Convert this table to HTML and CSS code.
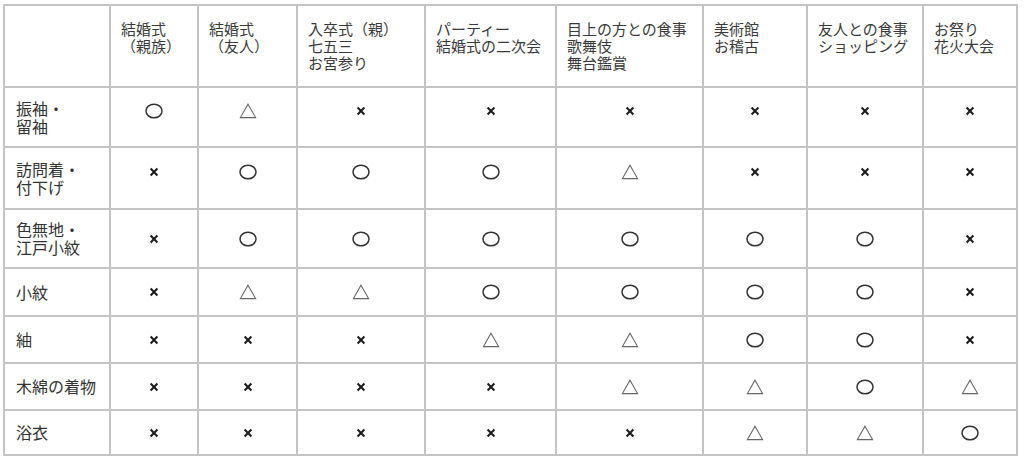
FILE: index.html
```html
<!DOCTYPE html>
<html lang="ja">
<head>
<meta charset="utf-8">
<title>着物の格と場面</title>
<link rel="stylesheet" href="styles.css">
</head>
<body>
<svg class="defs" width="0" height="0" aria-hidden="true">
  <symbol id="o" viewBox="0 0 18 16"><ellipse cx="9" cy="8" rx="8" ry="6.8" fill="none" stroke="#333" stroke-width="1.5"/></symbol>
  <symbol id="t" viewBox="0 0 18 16"><path d="M9 1.2 L16.6 14.6 H1.4 Z" fill="none" stroke="#666" stroke-width="1.1"/></symbol>
  <symbol id="x" viewBox="0 0 10 10"><path d="M1.6 1.6 L8.4 8.4 M8.4 1.6 L1.6 8.4" stroke="#1e1e1e" stroke-width="2.1"/></symbol>
</svg>
<div class="grid" role="table">
  <div class="cell head"></div>
  <div class="cell head">結婚式<br>（親族）</div>
  <div class="cell head">結婚式<br>（友人）</div>
  <div class="cell head">入卒式（親）<br>七五三<br>お宮参り</div>
  <div class="cell head">パーティー<br>結婚式の二次会</div>
  <div class="cell head">目上の方との食事<br>歌舞伎<br>舞台鑑賞</div>
  <div class="cell head">美術館<br>お稽古</div>
  <div class="cell head">友人との食事<br>ショッピング</div>
  <div class="cell head">お祭り<br>花火大会</div>

  <div class="cell label">振袖・<br>留袖</div>
  <div class="cell sym up"><svg class="so"><use href="#o"/></svg></div>
  <div class="cell sym up"><svg class="st"><use href="#t"/></svg></div>
  <div class="cell sym up"><svg class="sx"><use href="#x"/></svg></div>
  <div class="cell sym up"><svg class="sx"><use href="#x"/></svg></div>
  <div class="cell sym up"><svg class="sx"><use href="#x"/></svg></div>
  <div class="cell sym up"><svg class="sx"><use href="#x"/></svg></div>
  <div class="cell sym up"><svg class="sx"><use href="#x"/></svg></div>
  <div class="cell sym up"><svg class="sx"><use href="#x"/></svg></div>

  <div class="cell label">訪問着・<br>付下げ</div>
  <div class="cell sym up"><svg class="sx"><use href="#x"/></svg></div>
  <div class="cell sym up"><svg class="so"><use href="#o"/></svg></div>
  <div class="cell sym up"><svg class="so"><use href="#o"/></svg></div>
  <div class="cell sym up"><svg class="so"><use href="#o"/></svg></div>
  <div class="cell sym up"><svg class="st"><use href="#t"/></svg></div>
  <div class="cell sym up"><svg class="sx"><use href="#x"/></svg></div>
  <div class="cell sym up"><svg class="sx"><use href="#x"/></svg></div>
  <div class="cell sym up"><svg class="sx"><use href="#x"/></svg></div>

  <div class="cell label">色無地・<br>江戸小紋</div>
  <div class="cell sym"><svg class="sx"><use href="#x"/></svg></div>
  <div class="cell sym"><svg class="so"><use href="#o"/></svg></div>
  <div class="cell sym"><svg class="so"><use href="#o"/></svg></div>
  <div class="cell sym"><svg class="so"><use href="#o"/></svg></div>
  <div class="cell sym"><svg class="so"><use href="#o"/></svg></div>
  <div class="cell sym"><svg class="so"><use href="#o"/></svg></div>
  <div class="cell sym"><svg class="so"><use href="#o"/></svg></div>
  <div class="cell sym"><svg class="sx"><use href="#x"/></svg></div>

  <div class="cell label">小紋</div>
  <div class="cell sym"><svg class="sx"><use href="#x"/></svg></div>
  <div class="cell sym"><svg class="st"><use href="#t"/></svg></div>
  <div class="cell sym"><svg class="st"><use href="#t"/></svg></div>
  <div class="cell sym"><svg class="so"><use href="#o"/></svg></div>
  <div class="cell sym"><svg class="so"><use href="#o"/></svg></div>
  <div class="cell sym"><svg class="so"><use href="#o"/></svg></div>
  <div class="cell sym"><svg class="so"><use href="#o"/></svg></div>
  <div class="cell sym"><svg class="sx"><use href="#x"/></svg></div>

  <div class="cell label">紬</div>
  <div class="cell sym"><svg class="sx"><use href="#x"/></svg></div>
  <div class="cell sym"><svg class="sx"><use href="#x"/></svg></div>
  <div class="cell sym"><svg class="sx"><use href="#x"/></svg></div>
  <div class="cell sym"><svg class="st"><use href="#t"/></svg></div>
  <div class="cell sym"><svg class="st"><use href="#t"/></svg></div>
  <div class="cell sym"><svg class="so"><use href="#o"/></svg></div>
  <div class="cell sym"><svg class="so"><use href="#o"/></svg></div>
  <div class="cell sym"><svg class="sx"><use href="#x"/></svg></div>

  <div class="cell label">木綿の着物</div>
  <div class="cell sym"><svg class="sx"><use href="#x"/></svg></div>
  <div class="cell sym"><svg class="sx"><use href="#x"/></svg></div>
  <div class="cell sym"><svg class="sx"><use href="#x"/></svg></div>
  <div class="cell sym"><svg class="sx"><use href="#x"/></svg></div>
  <div class="cell sym"><svg class="st"><use href="#t"/></svg></div>
  <div class="cell sym"><svg class="st"><use href="#t"/></svg></div>
  <div class="cell sym"><svg class="so"><use href="#o"/></svg></div>
  <div class="cell sym"><svg class="st"><use href="#t"/></svg></div>

  <div class="cell label">浴衣</div>
  <div class="cell sym"><svg class="sx"><use href="#x"/></svg></div>
  <div class="cell sym"><svg class="sx"><use href="#x"/></svg></div>
  <div class="cell sym"><svg class="sx"><use href="#x"/></svg></div>
  <div class="cell sym"><svg class="sx"><use href="#x"/></svg></div>
  <div class="cell sym"><svg class="sx"><use href="#x"/></svg></div>
  <div class="cell sym"><svg class="st"><use href="#t"/></svg></div>
  <div class="cell sym"><svg class="st"><use href="#t"/></svg></div>
  <div class="cell sym"><svg class="so"><use href="#o"/></svg></div>
</div>
</body>
</html>
```

FILE: styles.css
```css
* { box-sizing: border-box; }

html, body {
  margin: 0;
  padding: 0;
  background: #ffffff;
}

body {
  font-family: "Liberation Sans", "Noto Sans CJK JP", sans-serif;
  color: #333333;
}

.defs {
  position: absolute;
  width: 0;
  height: 0;
  overflow: hidden;
}

.grid {
  display: grid;
  grid-template-columns: 104px 86px 97px 126px 129px 145px 102px 114px 92px;
  grid-template-rows: 80px 58px 60px 57px 46px 45px 45px 43px;
  gap: 2px;
  padding: 2px;
  margin: 4px 0 0 3px;
  width: max-content;
  background: #c4c4c4;
}

.cell {
  background: #ffffff;
}

.head {
  font-size: 15px;
  line-height: 17px;
  padding: 15px 4px 0 10px;
  white-space: nowrap;
  color: #3a3a3a;
}

.label {
  display: flex;
  align-items: center;
  font-size: 16px;
  line-height: 18px;
  padding: 3px 4px 0 11px;
  white-space: nowrap;
  color: #333333;
}

.sym {
  display: flex;
  align-items: center;
  justify-content: center;
}

.sym.up {
  padding-bottom: 13px;
}

.so { width: 18px; height: 16px; }
.st { width: 18px; height: 16px; }
.sx { width: 10px; height: 10px; }
```
